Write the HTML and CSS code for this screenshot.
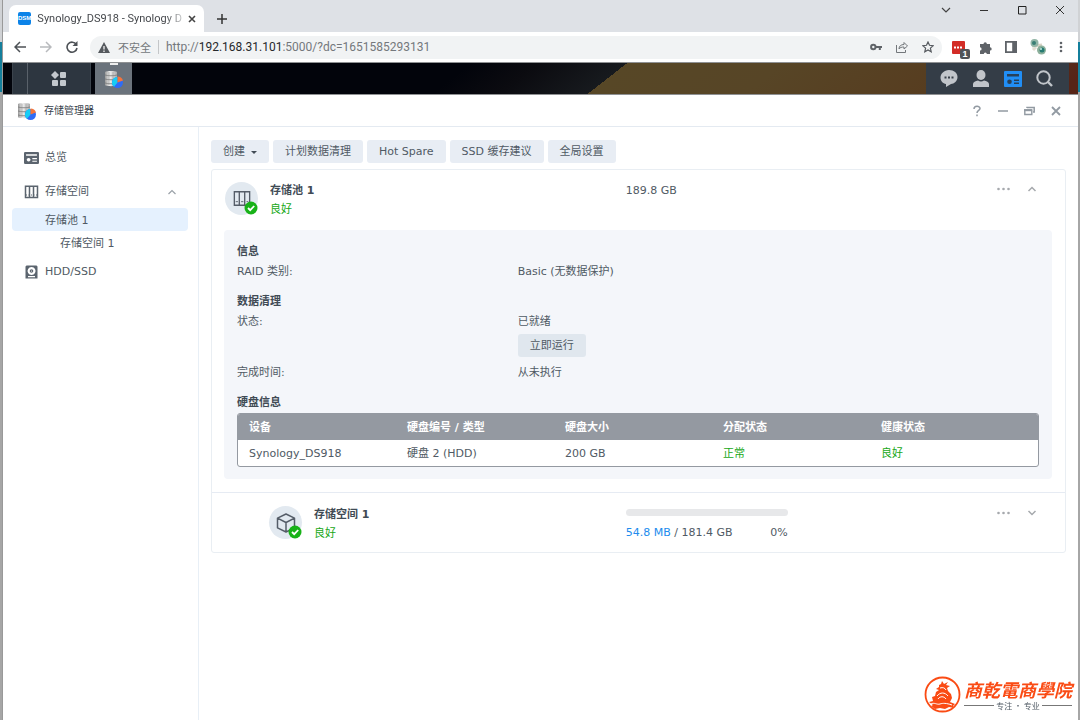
FILE: index.html
```html
<!DOCTYPE html>
<html lang="zh-CN">
<head>
<meta charset="utf-8">
<title>Synology_DS918 - Synology DiskStation</title>
<link rel="stylesheet" href="styles.css">
</head>
<body>
<svg class="defs" aria-hidden="true">
  <defs>
    <linearGradient id="metal"><stop offset="0" stop-color="#9a9a9a"/><stop offset=".4" stop-color="#eee"/><stop offset="1" stop-color="#aaa"/></linearGradient>
  </defs>
  <symbol id="storage" viewBox="0 0 18 18">
    <path d="M0 2c0-1.500 12-1.500 12 0v13c0 1.500-12 1.500-12 0z" fill="url(#metal)"/>
    <path d="M0 5c3 1 9 1 12 0M0 9c3 1 9 1 12 0M0 13c3 1 9 1 12 0" fill="none" stroke="#777" stroke-width=".8"/>
    <path d="M4 2v13M8 2v13" stroke="#999" stroke-width=".6"/>
    <circle cx="12.500" cy="12.500" r="5.500" fill="#2f6cf6"/>
    <path d="M12.500 12.500L9 16.700A5.500 5.500 0 0 1 12.500 7z" fill="#16cdf5"/>
    <path d="M12.500 12.500V6.500a6 6 0 0 1 5.500 4z" fill="#f5743b"/>
  </symbol>
  <symbol id="ok" viewBox="0 0 14 14"><circle cx="7" cy="7" r="6.500" fill="#18b218"/><path d="M4 7l2.200 2.200L10.200 5" fill="none" stroke="#fff" stroke-width="1.800"/></symbol>
  <symbol id="news" viewBox="0 0 18 16"><path fill-rule="evenodd" fill="currentColor" d="M1 0h16l1 1v14l-1 1H1l-1-1V1zM2.500 3v2h13V3zm3 5a2.300 2.300 0 1 0 .1 0zM10 8v1.500h5.500V8zm0 3.500V13h5.500v-1.500z"/></symbol>
  <symbol id="news-tray" viewBox="0 0 18 16"><rect width="18" height="16" rx="1" fill="#218ef5"/><path d="M3 3h12v2.500H3zM10 8.500h5V10h-5zm0 3h5V13h-5z" fill="#27405a"/><circle cx="5.500" cy="10.700" r="2.300" fill="#27405a"/></symbol>
</svg>
<div class="desktop">
<div class="browser">
  <header class="tabs">
    <div class="tab">
      <span class="favicon">DSM</span>
      <span class="tab-title">Synology_DS918 - Synology D</span>
      <button class="plain" aria-label="关闭标签页"><svg width="8" height="8" viewBox="0 0 8 8"><path d="M1 1l6 6M7 1L1 7" stroke="#444" stroke-width="1.600"/></svg></button>
    </div>
    <button class="plain new-tab" aria-label="新标签页"><svg width="10" height="10" viewBox="0 0 10 10"><path d="M5 0v10M0 5h10" stroke="#333" stroke-width="1.500"/></svg></button>
    <div class="win-controls">
      <button class="plain" aria-label="搜索标签页"><svg width="10" height="10" viewBox="0 0 10 10"><path d="M1 3l4 4 4-4" fill="none" stroke="#444" stroke-width="1.200"/></svg></button>
      <button class="plain" aria-label="最小化"><svg width="10" height="10" viewBox="0 0 10 10"><path d="M1 5.500h8" stroke="#333"/></svg></button>
      <button class="plain" aria-label="最大化"><svg width="10" height="10" viewBox="0 0 10 10"><path d="M1.500 1.500h7.500v7.500H1.500z" fill="none" stroke="#222"/></svg></button>
      <button class="plain" aria-label="关闭"><svg width="10" height="10" viewBox="0 0 10 10"><path d="M1 1l8 8M9 1L1 9" stroke="#333"/></svg></button>
    </div>
  </header>
  <nav class="toolbar">
    <button class="plain" aria-label="后退"><svg width="12" height="12" viewBox="0 0 12 12"><path d="M12 6H1.500M6 1L1 6l5 5" fill="none" stroke="#4d5156" stroke-width="1.500"/></svg></button>
    <button class="plain" aria-label="前进"><svg width="12" height="12" viewBox="0 0 12 12"><path d="M0 6h10.500M6 1l5 5-5 5" fill="none" stroke="#b8babd" stroke-width="1.500"/></svg></button>
    <button class="plain" aria-label="刷新"><svg width="12" height="12" viewBox="0 0 12 12"><path d="M10.300 3.500A5 5 0 1 0 11 7" fill="none" stroke="#4d5156" stroke-width="1.600"/><path d="M11.500 0v5h-5z" fill="#4d5156"/></svg></button>
    <div class="address">
      <svg width="12" height="11" viewBox="0 0 12 11"><path d="M6 0l6 11H0z" fill="#55595e"/><path d="M6 4v3.500M6 8.500V10" stroke="#fff" stroke-width="1.200"/></svg>
      <span class="insecure">不安全</span>
      <span class="url">http://<b>192.168.31.101</b>:5000/?dc=1651585293131</span>
      <span class="address-tools">
        <svg width="12" height="8" viewBox="0 0 12 8"><path fill="none" stroke="#5f6368" stroke-width="2" d="M5.500 4a2.200 2.200 0 1 0-4.400 0 2.200 2.200 0 0 0 4.400 0H12M9.800 4v3"/></svg>
        <svg width="12" height="12" viewBox="0 0 12 12"><path fill="none" stroke="#73777b" d="M.5 4v7.500h9V9M3 8c0-3 2-4.500 5-4.500v-2L11.500 5 8 8V6C5.500 6 4 6.500 3 8z"/></svg>
        <svg width="12" height="12" viewBox="0 0 12 12"><path fill="none" stroke="#55595e" stroke-width="1.200" d="M6 1l1.500 3.300 3.700.4-2.800 2.400.8 3.600L6 8.900l-3.200 1.800.8-3.600L.8 4.700l3.700-.4z"/></svg>
      </span>
    </div>
    <div class="extensions">
      <span class="red-ext"><svg width="14" height="13" viewBox="0 0 14 13"><rect width="13" height="13" rx="1" fill="#d32d27"/><path d="M2 6.500h2m1 0h2m1 0h2" stroke="#fff" stroke-width="2"/></svg><b>1</b></span>
      <svg width="13" height="13" viewBox="0 0 13 13"><path fill="#5f6368" d="M1 3h3.500a1.700 1.700 0 1 1 3.400 0H11v3.200a1.700 1.700 0 1 1 0 3.400V13H7.800a1.500 1.500 0 1 0-3 0H1V9.500a1.600 1.600 0 1 0 0-3.200z"/></svg>
      <svg width="12" height="12" viewBox="0 0 12 12"><path fill="#5f6368" fill-rule="evenodd" d="M0 0h12v12H0zM1.800 1.800v8.400H7.200V1.800z"/></svg>
      <svg width="16" height="16" viewBox="0 0 16 16"><path d="M2 7l10-1" stroke="#d8d3c5" stroke-width="3"/><path d="M3 11l3-3" stroke="#e2ded2" stroke-width="3"/><circle cx="4.500" cy="4" r="4" fill="#91b5a6"/><circle cx="4" cy="4" r="2" fill="#397e74"/><circle cx="11.500" cy="11" r="4.500" fill="#8db09c"/><circle cx="12" cy="11" r="2.500" fill="#257b72"/><circle cx="11" cy="10" r="1" fill="#c5ece5"/></svg>
      <svg width="4" height="12" viewBox="0 0 4 12" fill="#5f6368"><circle cx="2" cy="2" r="1.300"/><circle cx="2" cy="6" r="1.300"/><circle cx="2" cy="10" r="1.300"/></svg>
    </div>
  </nav>
  <div class="dsm-bar">
    <button class="plain menu" aria-label="主菜单"><svg width="16" height="16" viewBox="0 0 16 16" fill="#c3c8ce"><path d="M4 0l4 4-4 4-4-4z"/><rect x="9" y="1" width="6" height="6" rx="1"/><rect x="1" y="9" width="6" height="6" rx="1"/><rect x="9" y="9" width="6" height="6" rx="1"/></svg></button>
    <button class="plain running" aria-label="存储管理器"><svg width="18" height="18"><use href="#storage"/></svg></button>
    <div class="tray">
      <svg width="18" height="17" viewBox="0 0 18 17"><path fill="#c1c5ca" d="M9 0c5 0 8.500 3 8.500 7S14 14 11 14l-5 3v-3C3 13.500.5 11 .5 7.500S4 0 9 0z"/><path d="M4.500 7.500h2m1.500 0h2m1.500 0h2" stroke="#384049" stroke-width="2"/></svg>
      <svg width="18" height="17" viewBox="0 0 18 17" fill="#c1c5ca"><ellipse cx="9" cy="5" rx="4.500" ry="5"/><path d="M1 17v-3c0-2 2.500-3 5-3.500 2 1.300 4 1.300 6 0 2.500.5 5 1.500 5 3.500v3z"/></svg>
      <svg width="18" height="16"><use href="#news-tray"/></svg>
      <svg width="17" height="17" viewBox="0 0 17 17"><circle cx="7.500" cy="7.500" r="6.200" fill="none" stroke="#c1c5ca" stroke-width="2"/><path d="M12 12l4 4" stroke="#c1c5ca" stroke-width="2.400"/></svg>
    </div>
  </div>
  <div class="titlebar">
    <svg width="18" height="18"><use href="#storage"/></svg>
    <h1>存储管理器</h1>
    <div class="title-tools">
      <button class="plain" aria-label="帮助"><svg width="10" height="12" viewBox="0 0 10 12"><path d="M2 4C2 .5 8 .5 8 3.500 8 5.500 5 5.300 5 8M5 9.500v1.700" fill="none" stroke="#929aa2" stroke-width="1.500"/></svg></button>
      <button class="plain" aria-label="最小化"><svg width="10" height="10" viewBox="0 0 10 10"><path d="M0 5h10" stroke="#929aa2" stroke-width="1.500"/></svg></button>
      <button class="plain" aria-label="还原"><svg width="11" height="10" viewBox="0 0 11 10"><path d="M3 2V1.500h7.200V6H9" fill="none" stroke="#929aa2" stroke-width="1.500"/><path d="M.8 4h7v4.500h-7z" fill="none" stroke="#929aa2" stroke-width="1.400"/><path d="M0 4.200h8" stroke="#929aa2" stroke-width="2"/></svg></button>
      <button class="plain" aria-label="关闭"><svg width="10" height="10" viewBox="0 0 10 10"><path d="M1 1l8 8M9 1L1 9" stroke="#929aa2" stroke-width="1.800"/></svg></button>
    </div>
  </div>
  <div class="app">
    <nav class="sidebar">
      <a href="#overview"><svg width="15" height="12" viewBox="0 0 18 16" preserveAspectRatio="none"><use href="#news"/></svg>总览</a>
      <a href="#storage-space"><svg width="15" height="14" viewBox="0 0 15 14"><path fill="none" stroke="#5b646e" stroke-width="1.500" d="M1.500 1.200h12v11.300h-12zM5.500 1v11.500M9.500 1v11.500"/><path stroke="#5b646e" d="M2 10h11" stroke-dasharray="1 1.500"/></svg>存储空间<svg class="caret" width="10" height="8" viewBox="0 0 10 8"><path d="M1.500 6L5 2.500 8.500 6" fill="none" stroke="#9aa1a8" stroke-width="1.200"/></svg></a>
      <a class="child selected" href="#pool">存储池 1</a>
      <a class="grandchild" href="#volume">存储空间 1</a>
      <a href="#disks"><svg width="15" height="14" viewBox="0 0 15 14"><path fill="#5b646e" fill-rule="evenodd" d="M2.500.5h10l1 1v12h-12v-12zM7.500 2a4 4 0 1 0 .1 0zM4 11v1.200h7V11z"/><circle cx="7.500" cy="6" r="1.800" fill="#5b646e"/><circle cx="7.500" cy="6" r=".6" fill="#fff"/></svg>HDD/SSD</a>
    </nav>
    <main>
      <div class="actions">
        <button class="btn">创建<svg width="6" height="3" viewBox="0 0 6 3"><path d="M0 0h6L3 3z" fill="#414b55"/></svg></button>
        <button class="btn">计划数据清理</button>
        <button class="btn">Hot Spare</button>
        <button class="btn">SSD 缓存建议</button>
        <button class="btn">全局设置</button>
      </div>
      <div class="card">
        <section class="item" id="pool">
          <div class="ident">
            <span class="badge"><svg class="glyph" width="18" height="17" viewBox="0 0 20 18"><path fill="none" stroke="#555d68" stroke-width="1.500" d="M1.500 1.500h17v15h-17zM7 1.500v15M13 1.500v15"/><path stroke="#555d68" d="M3 12.500h2.500m3.500 0h2.500m3.500 0H17"/></svg><svg class="state" width="14" height="14"><use href="#ok"/></svg></span>
            <div><h2>存储池 1</h2><p class="good">良好</p></div>
          </div>
          <p class="size">189.8 GB</p>
          <div class="row-tools">
            <button class="plain" aria-label="更多"><svg width="13" height="4" viewBox="0 0 13 4" fill="#a6a9ad"><circle cx="1.500" cy="2" r="1.300"/><circle cx="6.500" cy="2" r="1.300"/><circle cx="11.500" cy="2" r="1.300"/></svg></button>
            <button class="plain" aria-label="收起"><svg width="10" height="8" viewBox="0 0 10 8"><path d="M1.500 6L5 2.500 8.500 6" fill="none" stroke="#a6a9ad" stroke-width="1.500"/></svg></button>
          </div>
        </section>
        <div class="panel">
          <h3>信息</h3>
          <dl><dt>RAID 类别:</dt><dd>Basic (无数据保护)</dd></dl>
          <h3>数据清理</h3>
          <dl>
            <dt>状态:</dt><dd>已就绪<button class="btn run">立即运行</button></dd>
            <dt>完成时间:</dt><dd>从未执行</dd>
          </dl>
          <h3>硬盘信息</h3>
          <div class="table-wrap">
          <table>
            <thead><tr><th>设备</th><th>硬盘编号 / 类型</th><th>硬盘大小</th><th>分配状态</th><th>健康状态</th></tr></thead>
            <tbody><tr><td>Synology_DS918</td><td>硬盘 2 (HDD)</td><td>200 GB</td><td class="good">正常</td><td class="good">良好</td></tr></tbody>
          </table>
          </div>
        </div>
        <section class="item volume" id="volume">
          <div class="ident">
            <span class="badge"><svg class="glyph" width="20" height="20" viewBox="0 0 20 20"><path fill="none" stroke="#555d68" stroke-width="1.500" stroke-linejoin="round" d="M10 1l8.500 4.200v9.600L10 19l-8.500-4.200V5.200zM1.500 5.200L10 9.500l8.500-4.300M10 9.500V19"/></svg><svg class="state" width="14" height="14"><use href="#ok"/></svg></span>
            <div><h2>存储空间 1</h2><p class="good">良好</p></div>
          </div>
          <div class="usage"><div class="meter" role="progressbar" aria-label="已用空间" aria-valuenow="0"></div><p><span><b>54.8 MB</b> / 181.4 GB</span><span>0%</span></p></div>
          <div class="row-tools">
            <button class="plain" aria-label="更多"><svg width="13" height="4" viewBox="0 0 13 4" fill="#a6a9ad"><circle cx="1.500" cy="2" r="1.300"/><circle cx="6.500" cy="2" r="1.300"/><circle cx="11.500" cy="2" r="1.300"/></svg></button>
            <button class="plain" aria-label="展开"><svg width="10" height="8" viewBox="0 0 10 8"><path d="M1.500 2L5 5.500 8.500 2" fill="none" stroke="#a6a9ad" stroke-width="1.500"/></svg></button>
          </div>
        </section>
      </div>
    </main>
  </div>
</div>
</div>
<aside class="watermark">
  <svg width="37" height="37" viewBox="0 0 37 37"><circle cx="18.500" cy="18.500" r="17" fill="none" stroke="#fa4b14" stroke-width="1.800"/><path fill="#fa4b14" d="M15 9l2-1 1-3 2 3 4-2-2 3 4 1-3 2 1 3 3 3 1 4-2 4 5 2-2 2 1 2-5-1-4 2-5-1-5 1-4-3 2-1-4-3 4-1-1-4 3-1 1-4 3-2-3-1 3-2z"/><path fill="none" stroke="#fff" d="M16 12c3-1 5 0 6 2M13 20c3-4 8-4 11 0M14 23c2-3 6-3 8 0M7 28c3-2 6 1 9 0s6-1 12 1"/></svg>
  <div><p class="brand">商乾電商學院</p><p class="motto">专注 · 专业</p></div>
</aside>
</body>
</html>
```

FILE: styles.css
```css
* { box-sizing: border-box; }
body { margin: 0; font: 11px/20px "DejaVu Sans", "Noto Sans CJK SC", sans-serif; color: #505a64; }
h1, h2, h3, p, dl, dd { margin: 0; font-size: 11px; }
h2, h3 { color: #414b55; }
svg { display: block; flex: none; }
.defs { position: absolute; width: 0; height: 0; }
.plain { display: flex; align-items: center; justify-content: center; padding: 0; border: 0; background: none; }
.desktop { min-height: 100vh; padding: 0 2px; background: linear-gradient(#d0d2d5 42px, #147f9c 42px, #147f9c 92px, #a6a6a6 92px); }
.browser { display: flex; flex-direction: column; min-height: 100vh; background: #fff; border-left: 1px solid #999; }

.tabs { display: flex; align-items: center; height: 32px; padding-left: 6px; background: #dee1e6; }
.tab { display: flex; align-items: center; align-self: flex-end; gap: 6px; width: 195px; height: 27px; padding: 0 9px; border-radius: 7px 7px 0 0; background: #fff; }
.favicon { width: 14px; border-radius: 2px; background: #0c83e8; color: #fff; font: bold 6px/13px "Liberation Sans", sans-serif; text-align: center; }
.tab-title { flex: 1; font: 11px/18px "Roboto", sans-serif; color: #45484c; white-space: nowrap; mask-image: linear-gradient(90deg, #000 88%, transparent 105%); }
.new-tab { width: 36px; height: 27px; align-self: flex-end; }
.win-controls { display: flex; gap: 28px; margin: 0 13px 12px auto; }

.toolbar { display: flex; align-items: center; gap: 14px; height: 30px; padding: 0 15px 0 11px; }
.address { display: flex; flex: 1; align-items: center; height: 23px; margin-left: -2px; padding: 0 8px; border-radius: 12px; background: #f1f3f4; color: #74787c; }
.insecure { margin: 0 7px 0 8px; padding-right: 7px; border-right: 1px solid #c4c6c8; font: 11px/14px "Noto Sans CJK SC", sans-serif; }
.url { font: 12px/20px "Roboto", sans-serif; }
.url b { font-weight: 400; color: #26282b; }
.address-tools { display: flex; align-items: center; gap: 14px; margin-left: auto; }
.extensions { display: flex; align-items: center; gap: 13px; margin-left: -4px; }
.red-ext { position: relative; }
.red-ext b { position: absolute; left: 8px; top: 8px; width: 10px; border-radius: 2px; background: #505357; color: #fff; font: bold 9px/10px "Liberation Sans", sans-serif; text-align: center; }

.dsm-bar { display: flex; height: 33px; padding: 0 9px; border: solid #8f9193; border-width: 1px 0; background: linear-gradient(142deg, #02040b 0 42%, #0b0b10 48%, #171a1e 56%, #574726 56%, #574526 70%, #573d20 86%, #572417 98%); }
.menu { width: 79px; padding-left: 14px; border-right: 1px solid #3c444d; border-left: 1px solid #3c444d; background: linear-gradient(90deg, #2d3640 14px, #59616a 14px 15px, #2d3640 15px); }
.running { width: 37px; margin-left: 4px; background: linear-gradient(#eee, #eee) center top / 8px 2px no-repeat #6b737c; }
.tray { display: flex; align-items: center; gap: 14px; margin-left: auto; padding: 0 16px 0 14px; background: #343d47; }

.titlebar { display: flex; align-items: center; height: 32px; padding: 0 17px 0 15px; border-bottom: 1px solid #e4eaf1; }
.titlebar h1 { margin-left: 8px; font-weight: 400; font-size: 10px; color: #38424c; }
.title-tools { display: flex; align-items: center; gap: 16px; margin-left: auto; }

.app { display: flex; flex: 1; }
.sidebar { display: flex; flex-direction: column; flex: none; width: 196px; padding: 13px 10px 13px 9px; border-right: 1px solid #e8eff6; }
.sidebar a { display: flex; align-items: center; gap: 6px; height: 34px; padding: 2px 11px 0 12px; border-radius: 4px; color: #505a64; text-decoration: none; }
.sidebar .child, .sidebar .grandchild { height: 23px; padding-left: 33px; }
.sidebar .grandchild { padding-left: 48px; }
.sidebar .selected { background: #e5f1fe; }
.sidebar svg { color: #5b646e; }
.caret { margin-left: auto; }

main { flex: 1; min-width: 0; padding: 13px 12px; }
.actions { display: flex; gap: 4px; }
.btn { display: flex; align-items: center; gap: 6px; height: 23px; padding: 1px 12px 0; border: 0; border-radius: 3px; background: #e8edf4; color: #505a64; font: inherit; }
.card { margin-top: 6px; border: 1px solid #e9eef3; border-radius: 3px; }
.item { display: grid; grid-template-columns: 48.5% 1fr auto; padding: 11px 0; }
.ident { display: flex; gap: 12px; padding-left: 13px; line-height: 19px; }
.badge { position: relative; display: flex; align-items: center; justify-content: center; width: 33px; height: 33px; margin-top: 1px; border-radius: 50%; background: #e2e9f0; }
.state { position: absolute; right: 0; bottom: 0; }
.good { color: #18a818; }
.row-tools { display: flex; align-items: flex-start; gap: 17px; padding-right: 28px; }
.row-tools .plain { height: 16px; }
.volume { padding: 12px 0 9px; border-top: 1px solid #e6ebf3; }
.volume .ident { padding-left: 57px; }
.panel { margin: 0 13px 13px 12px; padding: 12px 13px; border-radius: 4px; background: #f4f6fa; }
dl { display: grid; grid-template-columns: 35% 1fr; row-gap: 6px; margin-bottom: 10px; }
.run { margin-top: 2px; background: #e0e7ee; }
.table-wrap { overflow: hidden; border: 1px solid #9499a1; border-radius: 3px; background: #fff; }
table { width: 100%; table-layout: fixed; border-collapse: collapse; }
th, td { width: 158px; height: 26px; padding: 1px 0 0 11px; text-align: left; }
th:last-child { width: auto; }
th { background: #9499a1; color: #fff; }
.usage { width: 162px; padding-top: 4px; }
.meter { height: 7px; border-radius: 4px; background: #e7e8ea; }
.usage p { display: flex; justify-content: space-between; margin-top: 7px; }
.usage b { font-weight: 400; color: #218bed; }
.watermark { position: fixed; right: 8px; bottom: 7px; display: flex; align-items: center; gap: 3px; }
.brand { font: italic bold 18px/22px "Noto Sans CJK TC", sans-serif; color: #fa4b14; }
.motto { display: flex; align-items: center; gap: 2px; font: 8px/12px "Noto Sans CJK SC", sans-serif; white-space: nowrap; }
.motto::before, .motto::after { content: ""; flex: 1; border-top: 1px solid #777; }
```
